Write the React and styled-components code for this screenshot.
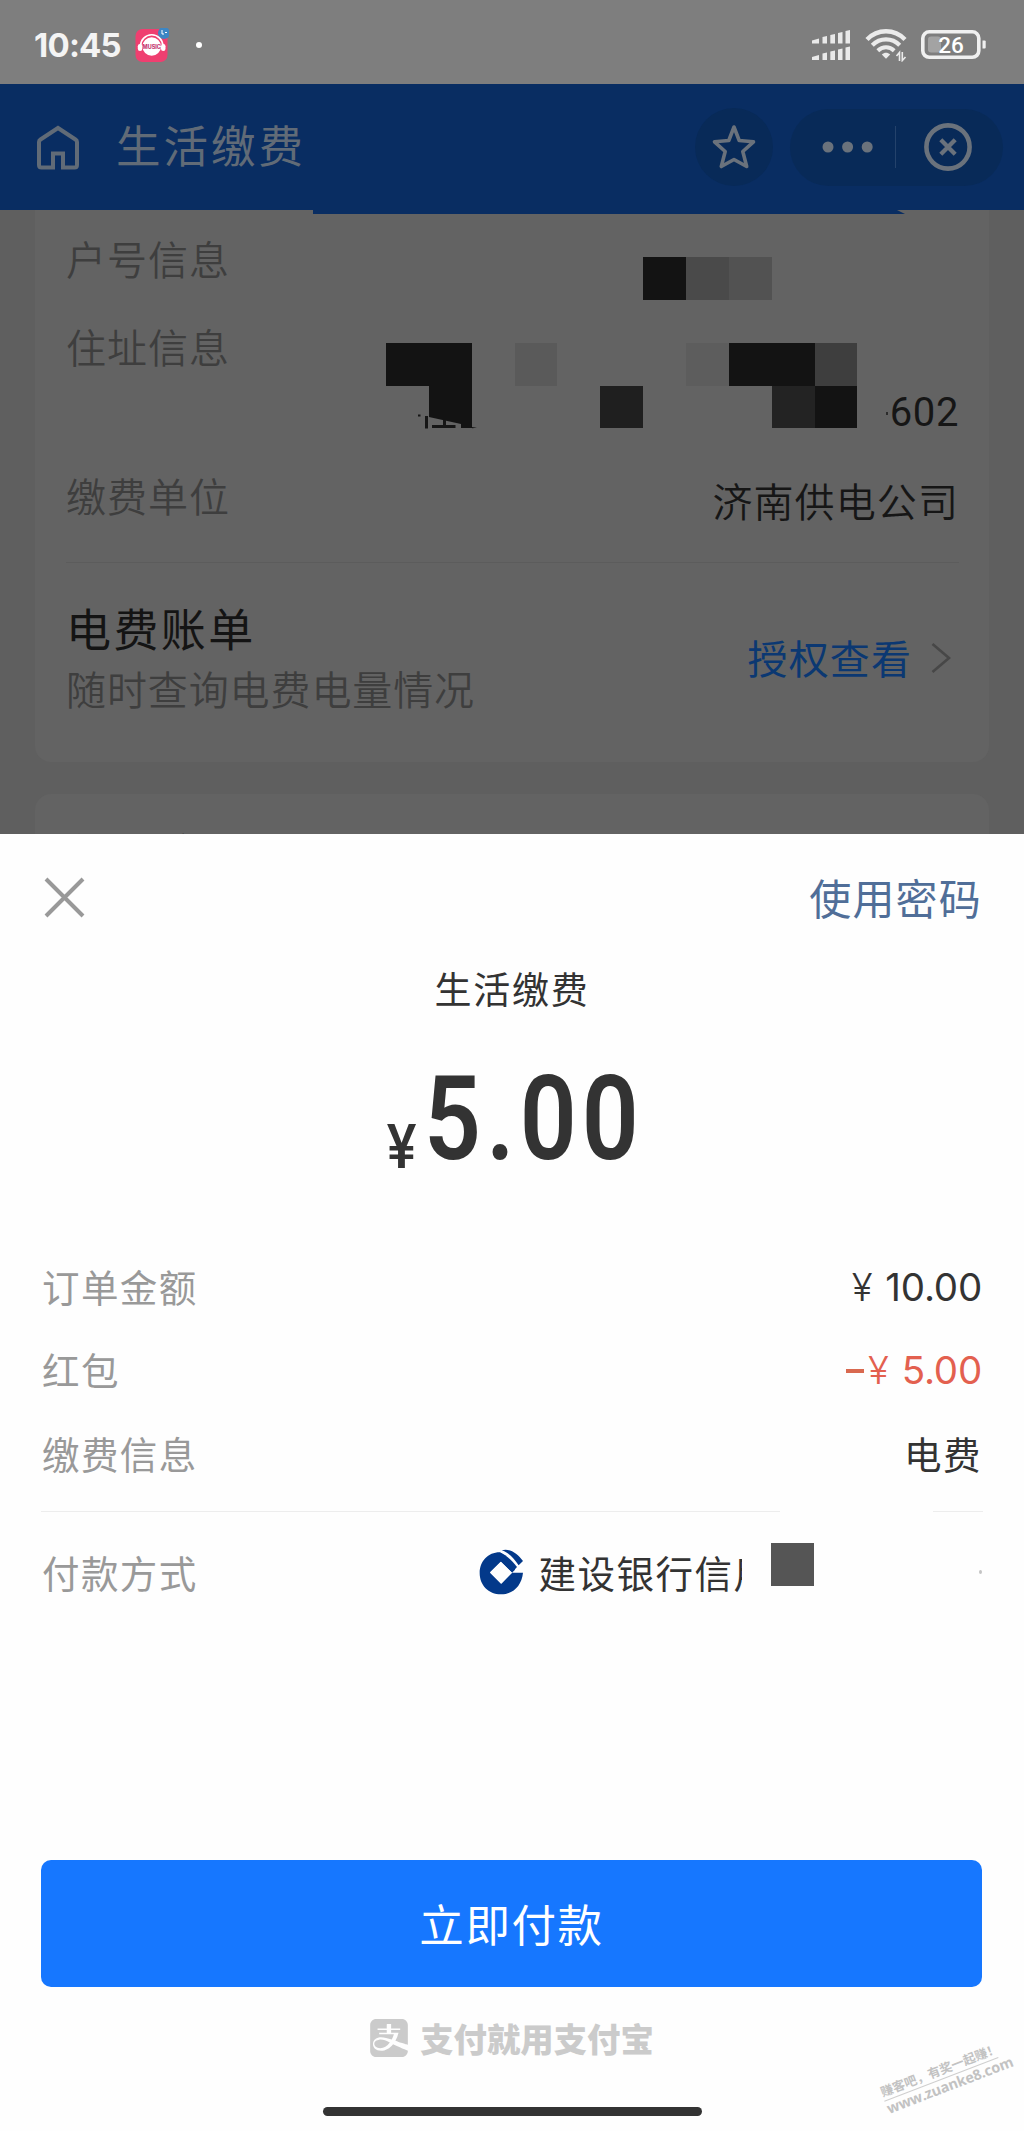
import React from "react";
import styled, { createGlobalStyle } from "styled-components";
import { SiAlipay } from "react-icons/si";

const GlobalStyle = createGlobalStyle`
  *,
  *::before,
  *::after {
    box-sizing: border-box;
    margin: 0;
    padding: 0;
  }

  body {
    font-family: "Noto Sans CJK SC", "Noto Sans", sans-serif;
    background-color: #fff;
  }
`;

const Screen = styled.div`
  width: 1024px;
  height: 2131px;
  overflow: hidden;
  position: relative;

  display: flex;
  flex-direction: column;
`;

// page behind the sheet

const Backdrop = styled.div`
  height: 834px;
  flex-shrink: 0;
  overflow: hidden;
  position: relative;

  background-color: #5f5f5f;
`;

const StatusBar = styled.div`
  height: 84px;
  padding: 6px 37px 0 34px;

  display: flex;
  align-items: center;
  justify-content: space-between;

  background-color: #7e7e7e;
`;

const StatusGroup = styled.div`
  display: flex;
  align-items: center;
  gap: ${(props) => props.$gap}px;
`;

const Time = styled.span`
  font-family: Inter, sans-serif;
  font-size: 33px;
  font-weight: 650;
  line-height: 40px;
  letter-spacing: -0.8px;
  color: #f4f4f4;
`;

const Dot = styled.span`
  width: 6px;
  height: 6px;
  margin-left: 13px;
  border-radius: 50%;
  background-color: #fff;
`;

const NavBar = styled.div`
  height: 126px;
  padding: 0 21px 0 36px;

  display: flex;
  align-items: center;

  background-color: #092d62;
`;

const NavTitle = styled.h1`
  flex: 1;
  margin: -6px 0 0 36px;

  font-size: 44.5px;
  font-weight: 400;
  line-height: 60px;
  letter-spacing: 3px;
  color: #616b77;
`;

const StarButton = styled.div`
  width: 78px;
  height: 78px;
  margin-right: 17px;
  border-radius: 50%;

  display: flex;
  align-items: center;
  justify-content: center;

  background-color: #082a58;
`;

const Capsule = styled.div`
  width: 213px;
  height: 77px;
  padding: 0 31px 0 32px;
  border-radius: 39px;

  display: flex;
  align-items: center;
  justify-content: space-between;

  background-color: #082a58;
`;

const CapsuleLine = styled.span`
  width: 1px;
  height: 42px;
  margin: 0 9px 0 2px;
  background-color: #24426b;
`;

const NavStrip = styled.div`
  position: absolute;
  top: 210px;
  left: 313px;
  width: 592px;
  height: 4px;

  background-color: #092d62;
  clip-path: polygon(0 0, 584px 0, 100% 100%, 0 100%);
`;

const Card = styled.section`
  margin: ${(props) => props.$top || 0}px 35px 0;
  padding: ${(props) => props.$padding};
  border-radius: ${(props) => (props.$top ? "16px" : "0 0 16px 16px")};

  background-color: #636363;
`;

const InfoRow = styled.div`
  height: ${(props) => props.$height}px;

  display: flex;
  justify-content: space-between;
  align-items: ${(props) => props.$align || "flex-start"};
`;

const InfoLabel = styled.span`
  align-self: flex-start;
  padding-top: ${(props) => props.$top || 0}px;

  font-size: 40px;
  font-weight: 350;
  line-height: 60px;
  letter-spacing: 1px;
  color: #3e3e3e;
`;

const InfoValue = styled.span`
  padding-top: ${(props) => props.$top || 0}px;

  font-size: 40px;
  font-weight: 350;
  line-height: 60px;
  letter-spacing: 1.1px;
  color: #161616;
`;

const HouseNumber = styled.span`
  display: flex;
  align-items: center;
  gap: 2px;

  font-family: Roboto, sans-serif;
  font-size: 40px;
  line-height: 58px;
  letter-spacing: 0.6px;
  color: #161616;
`;

const Speck = styled.span`
  width: 2px;
  height: 3px;
  background-color: #2c2c2c;
`;

const Bill = styled.div`
  height: 156px;
  padding-top: 35px;
  border-top: 1px solid #5c5c5c;

  display: flex;
  justify-content: space-between;
`;

const BillTitle = styled.h2`
  font-size: 45px;
  font-weight: 400;
  line-height: 60px;
  letter-spacing: 2.4px;
  color: #141414;
`;

const BillText = styled.p`
  font-size: 40px;
  font-weight: 350;
  line-height: 60px;
  letter-spacing: 0.9px;
  color: #3e3e3e;
`;

const BillLink = styled.div`
  height: 117px;
  padding-right: 8px;

  display: flex;
  align-items: center;
  gap: 19px;

  font-size: 40px;
  font-weight: 400;
  letter-spacing: 1.1px;
  color: #0b3872;
`;

const NextTitle = styled.h2`
  font-size: 45px;
  font-weight: 700;
  line-height: 60px;
  color: #141414;
`;

// pixelated blocks over the private data

const Mosaic = styled.div`
  position: absolute;
  top: 257px;
  left: 386px;

  display: grid;
  grid-template-columns: repeat(11, 42.86px);
  grid-template-rows: repeat(4, 42.86px);
`;

const Block = styled.span`
  grid-column: ${(props) => props.$col};
  grid-row: ${(props) => props.$row};
  background-color: ${(props) => props.$color};
`;

const Residue = styled.svg`
  position: absolute;
  top: 412px;
  left: 414px;
`;

// payment sheet

const Sheet = styled.main`
  flex: 1;
  padding: 24px 42px 0;

  display: flex;
  flex-direction: column;

  background-color: #fefefe;
`;

const SheetHeader = styled.div`
  height: 80px;
  padding-left: 2px;

  display: flex;
  align-items: center;
  justify-content: space-between;
`;

const PasswordLink = styled.a`
  margin-top: -3px;

  font-size: 42px;
  font-weight: 400;
  line-height: 60px;
  letter-spacing: 1.2px;
  color: #506e98;
`;

const Merchant = styled.h2`
  margin-top: 25px;

  font-size: 37px;
  font-weight: 400;
  line-height: 50px;
  letter-spacing: 1.7px;
  text-align: center;
  color: #333;
`;

const Amount = styled.div`
  height: 100px;
  margin-top: 56px;

  display: flex;
  justify-content: center;
  align-items: baseline;

  font-family: Roboto, sans-serif;
  color: #333;
`;

const Yen = styled.span`
  font-size: 62px;
  font-weight: 500;
  transform: translate(6px, 9px) scaleX(0.9);
`;

const AmountNumber = styled.span`
  margin: 0 -35px 0 12px;

  font-size: 116px;
  font-weight: 560;
  line-height: 100px;
  letter-spacing: 6px;

  transform: scaleX(0.86);
  transform-origin: left;
`;

const Orders = styled.div`
  margin-top: 75px;
`;

const OrderRow = styled.div`
  height: 83.5px;

  display: flex;
  align-items: center;
  justify-content: space-between;
`;

const OrderLabel = styled.span`
  font-size: 37.5px;
  font-weight: 400;
  line-height: 56px;
  letter-spacing: 1.4px;
  color: #999;
`;

const OrderValue = styled.span`
  font-size: 37.5px;
  line-height: 56px;
  letter-spacing: 1.5px;
  color: #333;
`;

const Money = styled.span`
  padding-top: 2px;

  display: flex;
  align-items: center;

  font-family: Inter, sans-serif;
  font-size: 38.5px;
  line-height: 56px;
  letter-spacing: -0.2px;
  color: ${(props) => props.$color || "#333"};
`;

const MoneySign = styled.span`
  margin-right: 13px;
  font-weight: 300;
`;

const Minus = styled.span`
  width: 18px;
  height: 4px;
  margin: 2px 4px 0 0;
  background-color: ${(props) => props.$color};
`;

const Dividers = styled.div`
  height: 1px;
  margin: 16px -1px 0;

  display: flex;
  justify-content: space-between;
`;

const Divider = styled.span`
  width: ${(props) => props.$width}px;
  background-color: #ededed;
`;

const PayRow = styled.div`
  height: 80px;
  margin-top: 20px;

  display: flex;
  align-items: center;
`;

const Bank = styled.div`
  margin-left: 281px;

  display: flex;
  align-items: center;
  gap: 15px;
`;

const BankName = styled.span`
  width: 203px;
  overflow: hidden;
  white-space: nowrap;

  font-size: 37.5px;
  line-height: 56px;
  letter-spacing: 1.5px;
  color: #333;
`;

const CardMask = styled.span`
  width: 43px;
  height: 43px;
  margin: -14px 0 0 29px;
  background-color: #555;
`;

const ArrowTip = styled.span`
  width: 3px;
  height: 4px;
  margin-left: auto;
  border-radius: 50%;
  background-color: #c4c4c4;
`;

const PayButton = styled.button`
  height: 127px;
  margin: 248px 0 0 -1px;
  border: none;
  border-radius: 10px;

  font-family: inherit;
  font-size: 44.5px;
  line-height: 60px;
  letter-spacing: 1.6px;

  color: #fff;
  background-color: #1677ff;
`;

const Slogan = styled.div`
  height: 76px;
  margin-top: 13px;

  display: flex;
  align-items: center;
  justify-content: center;
  gap: 12px;

  font-size: 33.4px;
  font-weight: 900;
  color: #cbcbcb;
`;

const HomeBar = styled.div`
  width: 379px;
  height: 9px;
  margin: 31px auto 0;
  border-radius: 5px;
  background-color: #333;
`;

const Watermark = styled.div`
  position: absolute;
  left: 880px;
  top: 2061px;
  width: 122px;

  transform: rotate(-21deg);
  color: #c2c2c2;
`;

const WatermarkText = styled.p`
  border-bottom: 1px solid #cfcfcf;
  font-size: 12.6px;
  font-weight: 700;
  line-height: 18px;
  white-space: nowrap;
`;

const WatermarkUrl = styled.p`
  font-family: "Open Sans", sans-serif;
  font-size: 14.5px;
  font-weight: 700;
  line-height: 16px;
  letter-spacing: -0.2px;
`;

const blocks = [
  [7, 1, "#131313"],
  [8, 1, "#4a4a4a"],
  [9, 1, "#525252"],
  [1, 3, "#131313"],
  [2, 3, "#131313"],
  [4, 3, "#5a5a5a"],
  [8, 3, "#5d5d5d"],
  [9, 3, "#131313"],
  [10, 3, "#131313"],
  [11, 3, "#3e3e3e"],
  [2, 4, "#131313"],
  [6, 4, "#1f1f1f"],
  [10, 4, "#232323"],
  [11, 4, "#131313"],
];

const MusicIcon = () => (
  <svg width="34" height="35" viewBox="0 0 34 35">
    <rect x="0.5" y="1" width="32" height="33" rx="7" fill="#ef3f70" />
    <circle cx="29" cy="5" r="6" fill="#3c86c4" />
    <path d="M27 2v4h2M30 4.500h2" stroke="#fff" strokeWidth="1" fill="none" />
    <path
      d="M5.500 18a11.200 11.200 0 0 1 22.400 0"
      stroke="#fff"
      strokeWidth="1.600"
      fill="none"
    />
    <circle cx="16.700" cy="18.500" r="9.300" fill="#fff" />
    <rect x="2.800" y="16" width="4.500" height="7" rx="2.200" fill="#fff" />
    <rect x="26" y="16" width="4.500" height="7" rx="2.200" fill="#fff" />
    <text
      x="16.700"
      y="20.500"
      textAnchor="middle"
      fontFamily="Inter, sans-serif"
      fontSize="5.500"
      fontWeight="800"
      fill="#c63e76"
    >
      MUSIC
    </text>
  </svg>
);

const SignalIcon = () => (
  <svg width="40" height="31" viewBox="0 0 40 31" fill="#e9e9e9">
    {[0, 16.5].map((y) => (
      <g key={y} transform={`translate(0 ${y})`}>
        <path d="M1 10.500 8 8.500V13.500H1z" />
        <path d="M11.500 7 16 6V13.500H11.500z" />
        <path d="M19.300 5 24 4V13.500H19.300z" />
        <path d="M27 3 31.500 2V13.500H27z" />
        <path d="M34.500 1 39 0V13.500H34.500z" />
      </g>
    ))}
  </svg>
);

const WifiIcon = () => (
  <svg width="42" height="33" viewBox="0 0 42 33" fill="none" stroke="#ebebeb">
    <path d="M2 10.500C12.500-.5 29.500-.5 40 10.500" strokeWidth="4.400" />
    <path d="M7.300 16.300C15 8.500 27 8.500 34.700 16.300" strokeWidth="4.200" />
    <path d="M12.800 21.700C17.500 17.200 24.500 17.200 29.200 21.700" strokeWidth="4" />
    <path d="M16.800 25.500C19.500 23 22.500 23 25.200 25.500L21 29.800z" fill="#ebebeb" stroke="none" />
    <path d="M34.500 32V23.500L31.500 27M37.300 23v8.500L40.500 28" strokeWidth="1.600" />
  </svg>
);

const BatteryIcon = () => (
  <svg width="66" height="30" viewBox="0 0 66 30">
    <rect x="7" y="6.500" width="13" height="16" rx="3" fill="#a3a3a3" />
    <rect
      x="1.800"
      y="1.800"
      width="56"
      height="25.500"
      rx="6.500"
      fill="none"
      stroke="#f0f0f0"
      strokeWidth="3.600"
    />
    <path d="M61.500 10.500h2.200q1 0 1 1v6q0 1-1 1h-2.200z" fill="#f0f0f0" />
    <text
      x="30"
      y="22.500"
      textAnchor="middle"
      fontFamily="Roboto, sans-serif"
      fontSize="22.500"
      fontWeight="500"
      fill="#fff"
    >
      26
    </text>
  </svg>
);

const HomeIcon = () => (
  <svg width="44" height="46" viewBox="0 0 44 46" fill="none">
    <path
      d="M17 43.500H5.500Q3 43.500 3 41V18Q3 16.500 4.500 15.500L22 4 39.500 15.500Q41 16.500 41 18V41Q41 43.500 38.500 43.500H27V29.500H17z"
      stroke="#616b77"
      strokeWidth="4"
    />
  </svg>
);

const StarIcon = () => (
  <svg width="46" height="48" viewBox="0 0 46 48" fill="none">
    <path
      d="M23 4 28.200 17.500 42.500 18.800 31.800 28.500 35.700 43.500 23 36.500 10.300 43.500 14.200 28.500 3.500 18.800 17.800 17.500z"
      stroke="#6a727c"
      strokeWidth="3.600"
      strokeLinejoin="round"
    />
  </svg>
);

const DotsIcon = () => (
  <svg width="52" height="12" viewBox="0 0 52 12" fill="#6a727c">
    <circle cx="6" cy="6" r="5.500" />
    <circle cx="25.600" cy="6" r="5.500" />
    <circle cx="45.200" cy="6" r="5.500" />
  </svg>
);

const CircleCloseIcon = () => (
  <svg width="48" height="48" viewBox="0 0 48 48" fill="none" stroke="#6a727c">
    <circle cx="24" cy="24" r="21.600" strokeWidth="4.600" />
    <path d="M16.800 16.800 31.200 31.200M31.200 16.800 16.800 31.200" strokeWidth="4.300" />
  </svg>
);

const BankLogo = () => (
  <svg width="45" height="46" viewBox="0 0 135 138">
    <path
      fill="#03398a"
      d="M62 10C27 10 2 37 2 72 2 108 28 136 66 136 102 136 128 110 132 71H99L67 104 33 70 65 38 99 71 108 62C98 40 84 20 62 10z"
    />
    <path fill="#fefefe" d="M66 38 99 71 66 104 33 71z" />
    <path fill="#03398a" d="M68 4C92-3 115 13 132 36L119 49C103 27 88 10 68 4z" />
    <path fill="#03398a" d="M62 10C84 20 98 34 114 54L103 66 66 36z" />
  </svg>
);

const App = () => {
  return (
    <Screen>
      <GlobalStyle />

      <Backdrop>
        <StatusBar>
          <StatusGroup $gap={14}>
            <Time>10:45</Time>
            <MusicIcon />
            <Dot />
          </StatusGroup>

          <StatusGroup $gap={14}>
            <SignalIcon />
            <WifiIcon />
            <BatteryIcon />
          </StatusGroup>
        </StatusBar>

        <NavBar>
          <HomeIcon />
          <NavTitle>生活缴费</NavTitle>
          <StarButton>
            <StarIcon />
          </StarButton>
          <Capsule>
            <DotsIcon />
            <CapsuleLine />
            <CircleCloseIcon />
          </Capsule>
        </NavBar>

        <Card $padding="18px 30px 44px 31px">
          <InfoRow $height={88}>
            <InfoLabel>户号信息</InfoLabel>
          </InfoRow>
          <InfoRow $height={126} $align="flex-end">
            <InfoLabel>住址信息</InfoLabel>
            <HouseNumber>
              <Speck />
              602
            </HouseNumber>
          </InfoRow>
          <InfoRow $height={120}>
            <InfoLabel $top={23}>缴费单位</InfoLabel>
            <InfoValue $top={28}>济南供电公司</InfoValue>
          </InfoRow>

          <Bill>
            <div>
              <BillTitle>电费账单</BillTitle>
              <BillText>随时查询电费电量情况</BillText>
            </div>
            <BillLink>
              授权查看
              <svg width="20" height="32" viewBox="0 0 20 32" fill="none">
                <path d="M1.500 3 18 17 1.500 31" stroke="#474747" strokeWidth="2.600" />
              </svg>
            </BillLink>
          </Bill>
        </Card>

        <Card $top={32} $padding="30px 36px">
          <NextTitle>缴费金额</NextTitle>
        </Card>

        <NavStrip />

        <Mosaic>
          {blocks.map(([col, row, color]) => (
            <Block key={`${col}-${row}`} $col={col} $row={row} $color={color} />
          ))}
        </Mosaic>

        <Residue width="64" height="20" viewBox="0 0 64 20">
          <path d="M15 5 47 12V18H15z" fill="#636363" />
          <path d="M11 4h3v12.500h-3zM4 2.500h2.500v2H4zM29 8h3v6h-3zM18 13h23.500v3H18zM58 15l5 .8-5 .5z" fill="#161616" />
        </Residue>
      </Backdrop>

      <Sheet>
        <SheetHeader>
          <svg width="42" height="42" viewBox="0 0 42 42" fill="none">
            <path d="M2 2 39 39M39 2 2 39" stroke="#999" strokeWidth="4" />
          </svg>
          <PasswordLink>使用密码</PasswordLink>
        </SheetHeader>

        <Merchant>生活缴费</Merchant>

        <Amount>
          <Yen>¥</Yen>
          <AmountNumber>5.00</AmountNumber>
        </Amount>

        <Orders>
          <OrderRow>
            <OrderLabel>订单金额</OrderLabel>
            <Money>
              <MoneySign>¥</MoneySign>10.00
            </Money>
          </OrderRow>
          <OrderRow>
            <OrderLabel>红包</OrderLabel>
            <Money $color="#e3604f">
              <Minus $color="#d9694f" />
              <MoneySign>¥</MoneySign>5.00
            </Money>
          </OrderRow>
          <OrderRow>
            <OrderLabel>缴费信息</OrderLabel>
            <OrderValue>电费</OrderValue>
          </OrderRow>
        </Orders>

        <Dividers>
          <Divider $width={739} />
          <Divider $width={50} />
        </Dividers>

        <PayRow>
          <OrderLabel>付款方式</OrderLabel>
          <Bank>
            <BankLogo />
            <BankName>建设银行信用</BankName>
          </Bank>
          <CardMask />
          <ArrowTip />
        </PayRow>

        <PayButton>立即付款</PayButton>

        <Slogan>
          <SiAlipay size={38} />
          支付就用支付宝
        </Slogan>

        <HomeBar />
      </Sheet>

      <Watermark>
        <WatermarkText>赚客吧，有奖一起赚！</WatermarkText>
        <WatermarkUrl>www.zuanke8.com</WatermarkUrl>
      </Watermark>
    </Screen>
  );
};

export default App;
